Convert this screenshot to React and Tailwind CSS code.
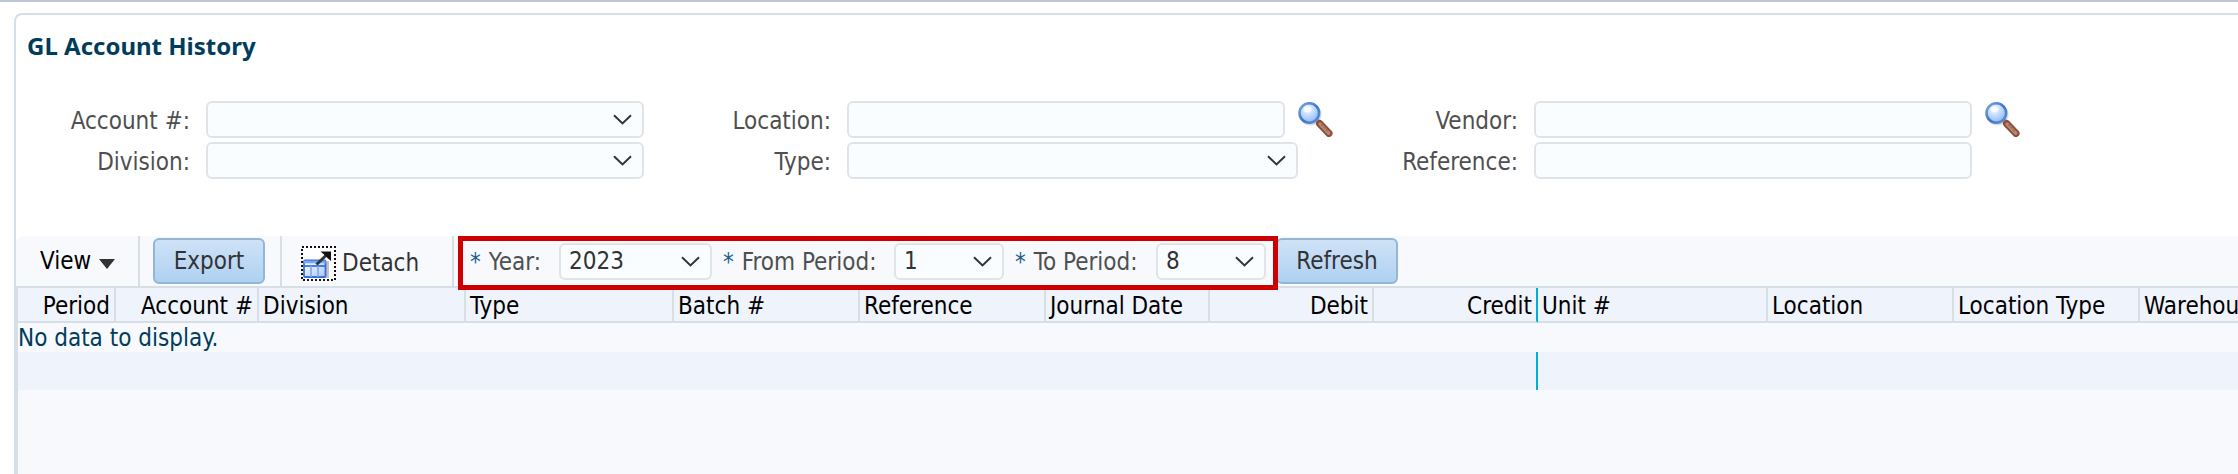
import React from "react";

function Chevron() {
  return (
    <svg
      className="pointer-events-none absolute top-[13px] right-3 h-[11px] w-[19px]"
      viewBox="0 0 19 11"
      fill="none"
      stroke="#333333"
      strokeWidth="2"
      aria-hidden="true"
    >
      <path d="M1 1.2 L9.5 9.4 L18 1.2" />
    </svg>
  );
}

const fieldBox =
  "h-[37px] w-full rounded-md border-2 border-[#dfe4e8] bg-[#fafdff] text-[#333333] outline-none";

function Select({ id, value = "", options = [], className = "" }) {
  return (
    <div className={`relative shrink-0 ${className}`}>
      <select id={id} defaultValue={value} className={`${fieldBox} appearance-none pl-2`}>
        {value === "" && <option value=""></option>}
        {options.map((o) => (
          <option key={o} value={o}>
            {o}
          </option>
        ))}
      </select>
      <Chevron />
    </div>
  );
}

function TextField({ id }) {
  return (
    <div className="w-[438px] shrink-0">
      <input id={id} type="text" className={`${fieldBox} block px-2`} />
    </div>
  );
}

function SearchIcon({ id }) {
  return (
    <svg className="h-[35px] w-[35px]" viewBox="0 0 35 35" aria-hidden="true">
      <defs>
        <radialGradient id={`${id}-lens`} cx="0.4" cy="0.3" r="0.75">
          <stop offset="0" stopColor="#f4faff" />
          <stop offset="0.45" stopColor="#c2dcff" />
          <stop offset="1" stopColor="#84b4fb" />
        </radialGradient>
        <linearGradient id={`${id}-rim`} x1="0" y1="0" x2="1" y2="1">
          <stop offset="0" stopColor="#7ea9e0" />
          <stop offset="0.5" stopColor="#4176c6" />
          <stop offset="1" stopColor="#5d8fd6" />
        </linearGradient>
      </defs>
      <path d="M19 24 L31 34.5 L35 30 L24 18 Z" fill="#c9c9cc" opacity="0.7" />
      <circle cx="12.5" cy="12.5" r="11" fill="#c9cdd4" opacity="0.7" />
      <path d="M18.5 18 L21.5 21" stroke="#9aa1ab" strokeWidth="4" />
      <path d="M21.5 21.5 L31 31.5" stroke="#8a4d38" strokeWidth="7" strokeLinecap="round" />
      <path d="M22 22 L30.8 31.2" stroke="#b98470" strokeWidth="3.4" strokeLinecap="round" />
      <path d="M23.5 22.5 L30 29.5" stroke="#9c6350" strokeWidth="1.4" strokeDasharray="2 1.5" />
      <circle cx="11.3" cy="11" r="9.8" fill={`url(#${id}-lens)`} stroke={`url(#${id}-rim)`} strokeWidth="2.6" />
      <ellipse cx="9.5" cy="7.5" rx="4" ry="3" fill="#ffffff" opacity="0.75" />
    </svg>
  );
}

function DetachIcon() {
  return (
    <svg className="h-[35px] w-[35px]" viewBox="0 0 35 35" aria-hidden="true">
      <defs>
        <linearGradient id="detach-body" x1="0" y1="0" x2="1" y2="1">
          <stop offset="0" stopColor="#ffffff" />
          <stop offset="1" stopColor="#a9c6fa" />
        </linearGradient>
      </defs>
      <rect x="1" y="1" width="33" height="33" fill="#ffffff" stroke="#111111" strokeWidth="2" strokeDasharray="2 2" />
      <path d="M24.5 15 H28 V32 H6 V31 H24.5 Z" fill="#9b9b9b" opacity="0.6" />
      <rect x="3" y="14.5" width="21.5" height="16.5" rx="1" fill="url(#detach-body)" stroke="#3a70dc" strokeWidth="1.8" />
      <path d="M3 16 H24.5" stroke="#7aa8f8" strokeWidth="2.6" />
      <path d="M3 20 H24.5" stroke="#3a70dc" strokeWidth="1.8" />
      <path d="M10 20 V31 M17 20 V31" stroke="#7aa8f8" strokeWidth="1.6" />
      <path d="M15.5 18.5 L25 9.5" stroke="#333333" strokeWidth="3" />
      <path d="M19.5 5.5 H30 V15 L27 12.5 L23 8.5 Z" fill="#111111" />
    </svg>
  );
}

function FormLabel({ htmlFor, children }) {
  return (
    <label htmlFor={htmlFor} className="pt-0.5 text-right text-[#4f4f4f]">
      {children}
    </label>
  );
}

function RequiredLabel({ htmlFor, className, children }) {
  return (
    <label
      htmlFor={htmlFor}
      className={`flex shrink-0 gap-2 pt-0.5 whitespace-nowrap text-[#4f4f4f] ${className}`}
    >
      <span className="text-[#1b5f8f]">*</span>
      <span>{children}</span>
    </label>
  );
}

function ToolButton({ children, className = "" }) {
  return (
    <button
      type="button"
      className={`h-[46px] shrink-0 rounded-md border-2 border-[#94b6d6] bg-linear-to-b from-[#cfe2f7] to-[#aed1f1] text-[#333333] ${className}`}
    >
      {children}
    </button>
  );
}

const columns = [
  ["Period", "w-[98px]", true],
  ["Account #", "w-[143px]", true],
  ["Division", "w-[207px]"],
  ["Type", "w-[208px]"],
  ["Batch #", "w-[186px]"],
  ["Reference", "w-[186px]"],
  ["Journal Date", "w-[164px]"],
  ["Debit", "w-[164px]", true],
  ["Credit", "w-[164px]", true],
  ["Unit #", "w-[230px]"],
  ["Location", "w-[186px]"],
  ["Location Type", "w-[186px]"],
  ["Warehouse", "w-[186px]"],
];

export default function App() {
  return (
    <div className="flex min-h-screen flex-col overflow-hidden border-t-2 border-[#bcc6d4] bg-white pt-[11px] pl-[14px] font-['DejaVu_Sans_Condensed','DejaVu_Sans',sans-serif] text-2xl leading-7">
      <main className="flex grow flex-col overflow-hidden rounded-tl-lg border-t-2 border-l-2 border-[#d6dfe6]">
        <h1 className="pt-[17px] pl-[11px] font-['Noto_Sans',sans-serif] font-bold text-[#003d5b]">
          GL Account History
        </h1>

        <form className="flex items-start pt-[41px] pb-[57px]">
          <div className="grid shrink-0 grid-cols-[174px_438px] items-center gap-x-4 gap-y-1">
            <FormLabel htmlFor="account">Account #:</FormLabel>
            <Select id="account" />
            <FormLabel htmlFor="division">Division:</FormLabel>
            <Select id="division" />
          </div>
          <div className="grid shrink-0 grid-cols-[187px_486px] items-center gap-x-4 gap-y-1">
            <FormLabel htmlFor="location">Location:</FormLabel>
            <div className="flex items-center gap-[13px]">
              <TextField id="location" />
              <button type="button" aria-label="Search location">
                <SearchIcon id="location-search" />
              </button>
            </div>
            <FormLabel htmlFor="type">Type:</FormLabel>
            <Select id="type" className="w-[451px]" />
          </div>
          <div className="grid shrink-0 grid-cols-[185px_486px] items-center gap-x-4 gap-y-1">
            <FormLabel htmlFor="vendor">Vendor:</FormLabel>
            <div className="flex items-center gap-[13px]">
              <TextField id="vendor" />
              <button type="button" aria-label="Search vendor">
                <SearchIcon id="vendor-search" />
              </button>
            </div>
            <FormLabel htmlFor="reference">Reference:</FormLabel>
            <TextField id="reference" />
          </div>
        </form>

        <section className="flex grow flex-col rounded-tl-lg bg-[#f7f9fd]">
          <div className="flex h-[52px] items-stretch border-b-2 border-[#d6dfe6]">
            <div className="flex w-[124px] shrink-0 items-center border-r-2 border-[#d6dfe6] pl-6">
              <button type="button" className="flex items-center gap-2 text-black">
                View
                <svg className="mt-1.5 h-2.5 w-4" viewBox="0 0 16 10" aria-hidden="true">
                  <path d="M0 0 H16 L8 10 Z" fill="#333333" />
                </svg>
              </button>
            </div>
            <div className="flex w-[142px] shrink-0 items-center border-r-2 border-[#d6dfe6] pl-[13px]">
              <ToolButton className="w-[112px]">Export</ToolButton>
            </div>
            <div className="flex w-[172px] shrink-0 items-center border-r-2 border-[#d6dfe6] pl-[19px]">
              <button type="button" className="flex items-center gap-1.5 pt-1 text-[#333333]">
                <DetachIcon />
                Detach
              </button>
            </div>
            <div className="relative ml-1 flex w-[820px] shrink-0 items-center pl-3">
              <RequiredLabel htmlFor="year" className="w-[89px]">Year:</RequiredLabel>
              <Select id="year" value="2023" options={["2023"]} className="w-[153px]" />
              <RequiredLabel htmlFor="from-period" className="ml-[11px] w-[171px]">From Period:</RequiredLabel>
              <Select id="from-period" value="1" options={["1"]} className="w-[110px]" />
              <RequiredLabel htmlFor="to-period" className="ml-[11px] w-[141px]">To Period:</RequiredLabel>
              <Select id="to-period" value="8" options={["8"]} className="w-[110px]" />
              <div className="pointer-events-none absolute inset-x-0 top-0 z-10 h-[54px] border-5 border-[#cc0000]" />
            </div>
            <div className="-ml-0.5 flex items-center">
              <ToolButton className="w-[122px]">Refresh</ToolButton>
            </div>
          </div>

          <table className="w-[2308px] table-fixed border-separate border-spacing-0 border-l-2 border-[#d6dfe6]">
            <thead>
              <tr className="h-[35px] bg-[#eff3fb]">
                {columns.map(([name, width, right]) => (
                  <th
                    key={name}
                    scope="col"
                    className={`border-r-2 border-b-2 border-b-[#d6dfe6] px-1 pt-0.5 pb-0 font-normal whitespace-nowrap text-black ${width} ${
                      name === "Credit" ? "border-r-[#00b0d4]" : "border-r-[#d6dfe6]"
                    } ${right ? "text-right" : "text-left"}`}
                  >
                    {name}
                  </th>
                ))}
              </tr>
            </thead>
            <tbody>
              <tr className="h-[29px]">
                <td colSpan={13} className="p-0 pt-px text-[#003d5b]">
                  No data to display.
                </td>
              </tr>
              <tr className="h-[38px] bg-[#eff3fb]">
                <td colSpan={9} className="border-r-2 border-[#00b0d4] p-0"></td>
                <td colSpan={4} className="p-0"></td>
              </tr>
            </tbody>
          </table>
          <div className="grow border-l-2 border-[#d6dfe6]" />
        </section>
      </main>
    </div>
  );
}
